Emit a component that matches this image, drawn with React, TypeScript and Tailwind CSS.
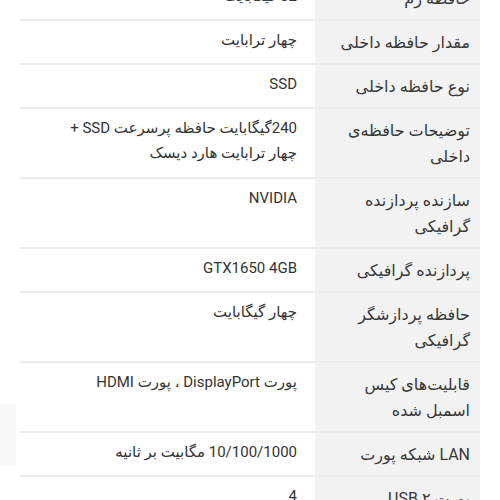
import React from "react";

type Row = { label: string[]; value: string[] };

const rows: Row[] = [
  { label: ["حافظه رم"], value: ["32 گیگابایت"] },
  { label: ["مقدار حافظه داخلی"], value: ["چهار ترابایت"] },
  { label: ["نوع حافظه داخلی"], value: ["SSD"] },
  {
    label: ["توضیحات حافظه‌ی", "داخلی"],
    value: ["240گیگابایت حافظه پرسرعت SSD +", "چهار ترابایت هارد دیسک"],
  },
  { label: ["سازنده پردازنده", "گرافیکی"], value: ["NVIDIA"] },
  { label: ["پردازنده گرافیکی"], value: ["GTX1650 4GB"] },
  { label: ["حافظه پردازشگر", "گرافیکی"], value: ["چهار گیگابایت"] },
  { label: ["قابلیت‌های کیس", "اسمبل شده"], value: ["پورت DisplayPort ، پورت HDMI"] },
  { label: ["LAN شبکه پورت"], value: ["10/100/1000 مگابیت بر ثانیه"] },
  { label: ["پورت USB ۲"], value: ["4"] },
];

export default function App() {
  return (
    <div
      className="relative w-[500px] h-[500px] overflow-hidden bg-white"
      style={{ fontFamily: 'Roboto, "DejaVu Sans", sans-serif' }}
    >
      <div className="absolute left-0 top-[404px] w-[16px] h-[62px] bg-[#f8f8f8]" />
      <div dir="rtl" className="mt-[-23px] px-[20px]">
        {rows.map((r, i) => (
          <div
            key={i}
            className="grid grid-cols-[165px_1fr] border-b-2 border-[#ebebeb]"
          >
            <div className="bg-[#f2f2f2] pr-[10px] pl-[20px] pt-[9px] pb-[7px] text-[16px] leading-[26px] text-[#383838]">
              {r.label.map((l, j) => (
                <div key={j} className="whitespace-nowrap">
                  {l}
                </div>
              ))}
            </div>
            <div className="pr-[18px] pt-[7px] pb-[7px] text-[15px] leading-[25px] text-[#333333]">
              {r.value.map((v, j) => (
                <div key={j} className="whitespace-nowrap">
                  {v}
                </div>
              ))}
            </div>
          </div>
        ))}
      </div>
    </div>
  );
}
